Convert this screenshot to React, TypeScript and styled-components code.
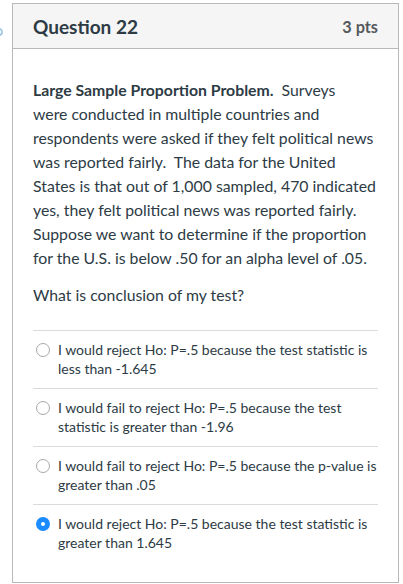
import React from "react";
import styled, { createGlobalStyle } from "styled-components";

const GlobalStyle = createGlobalStyle`
  html, body {
    margin: 0;
    padding: 0;
    background: #ffffff;
  }
  body {
    font-family: Lato, "Open Sans", "Liberation Sans", sans-serif;
    color: #2d3b45;
  }
`;

const Page = styled.div`
  display: flex;
  align-items: flex-start;
  padding-top: 3px;
  width: 403px;
  height: 584px;
  box-sizing: border-box;
  overflow: hidden;
`;

const Gutter = styled.div`
  width: 12px;
  flex: none;
  padding-top: 18px;
  overflow: hidden;
`;

const QuestionCard = styled.div`
  width: 387px;
  height: 580px;
  box-sizing: border-box;
  border: 1px solid #b8b8b8;
  display: flex;
  flex-direction: column;
`;

const CardHeader = styled.div`
  height: 44px;
  flex: none;
  background: #f5f5f5;
  border-bottom: 1px solid #b8b8b8;
  display: flex;
  align-items: center;
  justify-content: space-between;
  padding: 0 20px;
`;

const Title = styled.h2`
  margin: 0;
  font-size: 19px;
  font-weight: 700;
  color: #2d3b45;
`;

const Points = styled.span`
  font-size: 16.3px;
  font-weight: 700;
  color: #565a5c;
`;

const CardBody = styled.div`
  padding: 29px 20px 0;
`;

const Prompt = styled.p`
  margin: 0 2px 0 0;
  font-size: 15.8px;
  line-height: 24px;
  color: #2d3b45;

  & + & {
    margin-top: 13px;
  }

  strong {
    font-weight: 700;
  }
`;

const Answers = styled.div`
  margin-top: 23px;
  display: flex;
  flex-direction: column;
`;

const Answer = styled.label`
  display: flex;
  align-items: flex-start;
  gap: 8px;
  border-top: 1px solid #d9dcdf;
  padding: 9px 0 10px 3px;
  font-size: 14px;
  line-height: 19px;
  color: #2d3b45;
`;

const Radio = styled.span<{ $checked?: boolean }>`
  flex: none;
  width: 14px;
  height: 14px;
  margin-top: 3px;
  box-sizing: border-box;
  border-radius: 50%;
  border: ${p => (p.$checked ? "none" : "1px solid #a8a8a8")};
  background: ${p => (p.$checked ? "#1a8cff" : "#ffffff")};
  display: flex;
  align-items: center;
  justify-content: center;

  &::after {
    content: "";
    display: ${p => (p.$checked ? "block" : "none")};
    width: 4px;
    height: 4px;
    border-radius: 50%;
    background: #ffffff;
  }
`;

const FlagIcon = () => (
  <svg width="12" height="10" viewBox="0 0 12 10">
    <circle cx="-1" cy="5" r="3.2" fill="none" stroke="#7fb6dc" strokeWidth="1.2" />
  </svg>
);

const answers = [
  { text: "I would reject Ho: P=.5 because the test statistic is less than -1.645" },
  { text: "I would fail to reject Ho: P=.5 because the test statistic is greater than -1.96" },
  { text: "I would fail to reject Ho: P=.5 because the p-value is greater than .05" },
  { text: "I would reject Ho: P=.5 because the test statistic is greater than 1.645", checked: true },
];

export default function App() {
  return (
    <>
      <GlobalStyle />
      <Page>
        <Gutter>
          <FlagIcon />
        </Gutter>
        <QuestionCard>
          <CardHeader>
            <Title>Question 22</Title>
            <Points>3 pts</Points>
          </CardHeader>
          <CardBody>
            <Prompt>
              <strong>Large Sample Proportion Problem.</strong>&nbsp; Surveys
              <br />
              were conducted in multiple countries and respondents were asked if they felt
              political news was reported fairly.&nbsp; The data for the United States is that out
              of 1,000 sampled, 470 indicated yes, they felt political news was reported
              fairly.&nbsp; Suppose we want to determine if the proportion for the U.S. is below .50
              for an alpha level of .05.
            </Prompt>
            <Prompt>What is conclusion of my test?</Prompt>
            <Answers>
              {answers.map(a => (
                <Answer key={a.text}>
                  <Radio $checked={a.checked} />
                  <span>{a.text}</span>
                </Answer>
              ))}
            </Answers>
          </CardBody>
        </QuestionCard>
      </Page>
    </>
  );
}
